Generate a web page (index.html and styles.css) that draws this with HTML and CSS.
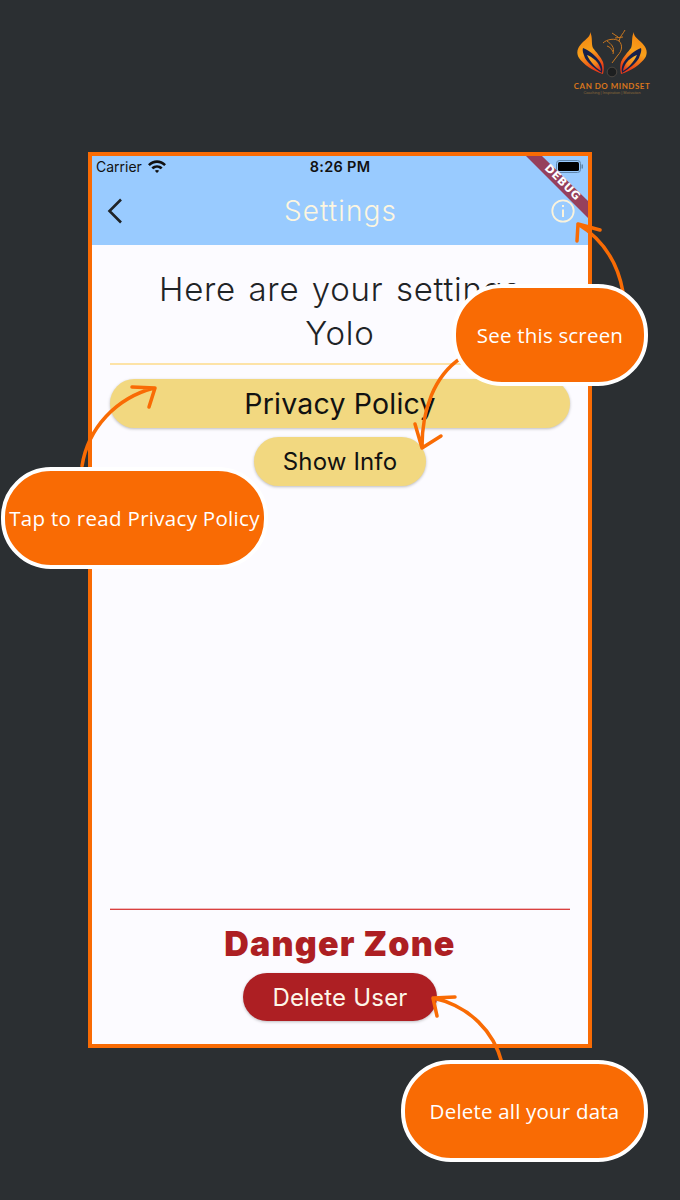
FILE: index.html
```html
<!DOCTYPE html>
<html lang="en">
<head>
<meta charset="utf-8">
<title>Settings</title>
<link rel="stylesheet" href="styles.css">
</head>
<body>
<div class="stage">
  <header class="brand">
    <div class="logo">
      <svg class="logo-mark" width="76" height="55" viewBox="0 0 76 55">
        <defs>
          <linearGradient id="flame" x1="0" y1="0" x2="0.300" y2="1">
            <stop offset="0" stop-color="#f57f10"/>
            <stop offset="0.550" stop-color="#f7a01a"/>
            <stop offset="1" stop-color="#ea3d17"/>
          </linearGradient>
          <linearGradient id="ember" x1="0" y1="0" x2="1" y2="1">
            <stop offset="0" stop-color="#fbc02d"/>
            <stop offset="0.600" stop-color="#f4811a"/>
            <stop offset="1" stop-color="#d81f26"/>
          </linearGradient>
        </defs>
        <g id="wing">
          <path fill="url(#flame)" d="M16 5C17 9 12 12 8 16C3 21 2 26 5 31C9 37 19 44 29 47C30 43 30 38 29 35C27 30 22 25 19 21C17 17 19 10 16 5Z"/>
          <path fill="#15204a" d="M9 21C15 23 22 29 26 35C28 38 29 42 28 46C21 42 14 36 11 31C10 28 8 24 9 21Z"/>
          <path fill="url(#ember)" d="M13 28C18 30 23 34 25 38C26 40 27 42 27 44C22 41 16 35 13 28Z"/>
        </g>
        <use href="#wing" transform="matrix(-1 0 0 1 76 0)"/>
        <path fill="none" stroke="#c9771f" stroke-width="1" d="M29 16C33 12 41 11 45 14C49 18 48 24 44 28C42 31 40 33 38 36M33 14C37 17 41 20 39 27M33 19C36 20 38 22 39 25M45 14C46 9 49 7 51 3M41 11L49 10M38 6L44 10"/>
        <circle cx="38" cy="45" r="4.800" fill="#1d1f20" stroke="#5b544c" stroke-width="0.700"/>
      </svg>
      <div class="logo-name">CAN DO MINDSET</div>
      <div class="logo-tag">Coaching | Inspiration | Motivation</div>
    </div>
  </header>

  <main class="phone">
    <div class="appbar">
      <div class="status">
        <div class="status-left">
          <span>Carrier</span>
          <svg width="18" height="13" viewBox="0 0 18 13">
            <path fill="#111" d="M0 4.200C5-1 13-1 18 4.200L16.200 6C12 2 6 2 1.800 6Z"/>
            <path fill="#111" d="M3.400 7.600C6.600 4.600 11.400 4.600 14.600 7.600L12.800 9.300C10.400 7.200 7.600 7.200 5.200 9.300Z"/>
            <path fill="#111" d="M6.800 10.800C8.100 9.800 9.900 9.800 11.200 10.800L9 13Z"/>
          </svg>
        </div>
        <span class="status-time">8:26 PM</span>
        <svg class="battery" width="27" height="13" viewBox="0 0 27 13">
          <rect x="0.500" y="0.500" width="24" height="12" rx="3" fill="none" stroke="#5f86ad"/>
          <rect x="2" y="2" width="21" height="9" rx="1.500" fill="#000"/>
          <rect x="25.500" y="4.500" width="1.500" height="4" fill="#5f86ad"/>
        </svg>
      </div>
      <div class="toolbar">
        <svg class="icon icon-back" width="20" height="28" viewBox="0 0 20 28">
          <path fill="none" stroke="#1f2326" stroke-width="2.600" d="M15 2.500L3.500 14L15 25.500"/>
        </svg>
        <h1 class="title">Settings</h1>
        <svg class="icon icon-info" width="24" height="24" viewBox="0 0 24 24">
          <circle cx="12" cy="12" r="10.700" fill="none" stroke="#fbf3dc" stroke-width="1.800"/>
          <path fill="none" stroke="#fbf3dc" stroke-width="2" d="M12 10.500V18M12 6V8"/>
        </svg>
      </div>
    </div>

    <div class="content">
      <section class="greeting">
        <h2 class="heading">Here are your settings<br>Yolo</h2>
        <hr class="rule rule-gold">
        <button class="btn btn-gold btn-wide">Privacy Policy</button>
        <button class="btn btn-gold btn-info">Show Info</button>
      </section>
      <section class="danger">
        <hr class="rule rule-red">
        <h2 class="danger-title">Danger Zone</h2>
        <button class="btn btn-red">Delete User</button>
      </section>
    </div>

    <svg class="ribbon" width="62" height="62" viewBox="0 0 62 62">
      <polygon points="0,0 16,0 62,45 62,62" fill="#96405c"/>
      <text x="37" y="30" transform="rotate(45 37 26)" class="ribbon-text" text-anchor="middle">DEBUG</text>
    </svg>
  </main>

  <svg class="arrows" width="680" height="1200" viewBox="0 0 680 1200">
    <g fill="none" stroke="#f96b04" stroke-width="3.500" stroke-linecap="round" stroke-linejoin="round">
      <path d="M623 292C618 264 604 240 578 224M600 230L578 224L577 241"/>
      <path d="M82 466C88 428 116 398 154 388M132 387L155 388L149 407"/>
      <path d="M461 358C434 376 422 410 422 447M415 424L422 448L441 436"/>
      <path d="M502 1063C494 1032 470 1006 433 998M455 997L433 998L437 1016"/>
    </g>
  </svg>

  <div class="callout callout-see">See this screen</div>
  <div class="callout callout-tap">Tap to read Privacy Policy</div>
  <div class="callout callout-delete">Delete all your data</div>
</div>
</body>
</html>
```

FILE: styles.css
```css
* { box-sizing: border-box; }

html, body {
  margin: 0;
  padding: 0;
  background: #2b2f32;
}

.stage {
  position: relative;
  width: 680px;
  height: 1200px;
  overflow: hidden;
  font-family: Inter, "Liberation Sans", sans-serif;
}

.brand {
  height: 152px;
  display: flex;
  justify-content: flex-end;
  padding: 27px 30px 0 0;
}

.logo {
  width: 76px;
  display: flex;
  flex-direction: column;
  align-items: center;
}

.logo-mark { display: block; flex: none; }

.logo-name {
  font-family: Lato, sans-serif;
  font-size: 8px;
  font-weight: 700;
  line-height: 9px;
  letter-spacing: 0.500px;
  color: #d9761c;
  white-space: nowrap;
}

.logo-tag {
  font-family: "Liberation Sans", sans-serif;
  font-size: 3.800px;
  line-height: 4px;
  color: #8d6a3a;
  white-space: nowrap;
}

.phone {
  position: relative;
  width: 504px;
  height: 896px;
  margin-left: 88px;
  border: 4px solid #f96b04;
  background: #fcfbff;
  display: flex;
  flex-direction: column;
}

.appbar {
  height: 89px;
  background: #99cbff;
  flex: none;
}

.status {
  height: 20px;
  padding: 0 5px 0 4px;
  display: flex;
  align-items: center;
  justify-content: space-between;
  position: relative;
  font-size: 14px;
  color: #111;
}

.status-left {
  display: flex;
  align-items: center;
  gap: 6px;
}

.status-time {
  position: absolute;
  left: 0;
  right: 0;
  text-align: center;
  font-weight: 600;
  font-size: 14.500px;
  letter-spacing: 0.300px;
}

.toolbar {
  height: 69px;
  padding: 0 13px 0 14px;
  display: grid;
  grid-template-columns: 1fr auto 1fr;
  align-items: center;
}

.icon { display: block; }
.icon-info { justify-self: end; }

.title {
  margin: 0;
  font-size: 28px;
  font-weight: 300;
  line-height: 36px;
  letter-spacing: 1.100px;
  color: #fdf6e0;
}

.content {
  flex: 1;
  display: flex;
  flex-direction: column;
  justify-content: space-between;
  padding: 22px 18px 23px;
}

.greeting,
.danger {
  display: flex;
  flex-direction: column;
  align-items: center;
}

.heading {
  margin: 0;
  font-size: 33px;
  font-weight: 350;
  line-height: 44px;
  letter-spacing: 0.750px;
  word-spacing: 2.500px;
  text-align: center;
  color: #1f2326;
}

.rule {
  width: 100%;
  height: 1px;
  margin: 0;
  border: 0;
}

.rule-gold {
  height: 2px;
  margin-top: 8px;
  background: #fde3a7;
}

.rule-red {
  background: #d9403f;
  box-shadow: 0 -1px 0 rgba(217, 64, 63, 0.35);
}

.btn {
  border: 0;
  font-family: inherit;
  font-weight: 400;
  border-radius: 25px;
  box-shadow: 0 1px 3px rgba(0, 0, 0, 0.25);
  padding: 0;
}

.btn-gold {
  background: #f2d880;
  color: #111;
}

.btn-wide {
  width: 100%;
  height: 49px;
  margin-top: 14px;
  font-size: 28.500px;
  letter-spacing: 0.200px;
}

.btn-info {
  width: 172px;
  height: 49px;
  margin-top: 9px;
  font-size: 24px;
  letter-spacing: 0.150px;
}

.danger-title {
  margin: 14px 0 0;
  font-size: 34px;
  font-weight: 900;
  line-height: 40px;
  letter-spacing: 1.150px;
  color: #ad1f23;
}

.btn-red {
  width: 194px;
  height: 48px;
  margin-top: 9px;
  background: #ad1f23;
  color: #fdf6e8;
  font-size: 24px;
  letter-spacing: 0.200px;
}

.ribbon {
  position: absolute;
  top: 0;
  right: 0;
}

.ribbon-text {
  font-family: "DejaVu Sans", sans-serif;
  font-size: 11px;
  font-weight: 700;
  letter-spacing: 0.500px;
  fill: #fff;
}

.arrows {
  position: absolute;
  top: 0;
  left: 0;
}

.callout {
  position: absolute;
  display: flex;
  align-items: center;
  justify-content: center;
  background: #f96b04;
  border: 4px solid #fff;
  border-radius: 50px;
  color: #fff;
  font-family: "Open Sans", sans-serif;
  font-size: 20.500px;
  letter-spacing: 0.200px;
  white-space: nowrap;
}

.callout-see {
  left: 452px;
  top: 284px;
  width: 196px;
  height: 102px;
}

.callout-tap {
  left: 1px;
  top: 467px;
  width: 267px;
  height: 102px;
  letter-spacing: 0.300px;
}

.callout-delete {
  left: 401px;
  top: 1060px;
  width: 247px;
  height: 102px;
}
```
